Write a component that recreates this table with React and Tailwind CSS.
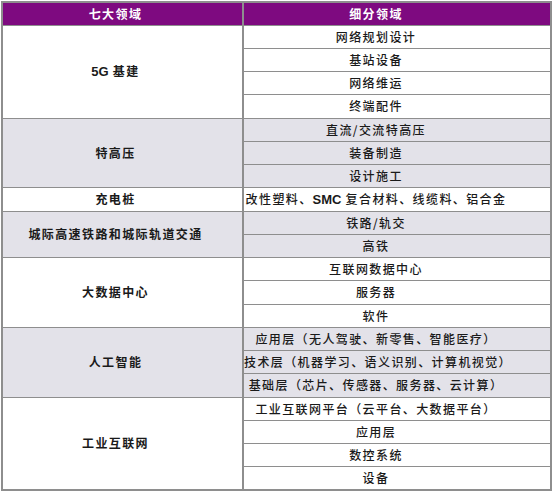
const groups = [
  { name: '5G 基建', bg: 'bg-white', items: ['网络规划设计', '基站设备', '网络维运', '终端配件'] },
  { name: '特高压', bg: 'bg-[#e3e2e9]', items: ['直流/交流特高压', '装备制造', '设计施工'] },
  { name: '充电桩', bg: 'bg-white', items: ['改性塑料、SMC 复合材料、线缆料、铝合金'] },
  { name: '城际高速铁路和城际轨道交通', bg: 'bg-[#e3e2e9]', items: ['铁路/轨交', '高铁'] },
  { name: '大数据中心', bg: 'bg-white', items: ['互联网数据中心', '服务器', '软件'] },
  {
    name: '人工智能',
    bg: 'bg-[#e3e2e9]',
    items: ['应用层（无人驾驶、新零售、智能医疗）', '技术层（机器学习、语义识别、计算机视觉）', '基础层（芯片、传感器、服务器、云计算）'],
  },
  { name: '工业互联网', bg: 'bg-white', items: ['工业互联网平台（云平台、大数据平台）', '应用层', '数控系统', '设备'] },
];

const font = { fontFamily: '"Noto Sans CJK SC", "Liberation Sans", sans-serif' };
const latin = { fontFamily: '"Liberation Sans", sans-serif' };

export default function App() {
  return (
    <div className="w-[553px] h-[492px] bg-white pt-px pl-px" style={font}>
      <table className="w-[551px] border-collapse border-2 border-[#8e8e8e] text-[12px] tracking-[1.4px] text-[#1a1a1a]">
        <thead>
          <tr className="h-[23px] bg-[#7e0a80] text-white">
            <th className="w-[241px] pr-[14px] border-r-2 border-[#8e8e8e] font-bold">七大领域</th>
            <th className="pr-[42px] font-bold">细分领域</th>
          </tr>
        </thead>
        <tbody>
          {groups.map((g) =>
            g.items.map((item, i) => (
              <tr key={g.name + i} className={`h-[23.25px] ${g.bg}`}>
                {i === 0 && (
                  <td
                    rowSpan={g.items.length}
                    className="pr-[14px] text-center font-bold border-r-2 border-t border-[#8e8e8e]"
                  >
                    {g.name.startsWith('5G') ? (
                      <>
                        <span className="text-[13px] tracking-normal" style={latin}>5G</span> 基建
                      </>
                    ) : (
                      g.name
                    )}
                  </td>
                )}
                <td className="pr-[42px] text-center font-medium border-t border-[#8e8e8e] leading-none">
                  {item.includes('SMC') ? (
                    <>
                      改性塑料、<span className="font-bold tracking-normal text-[13px]" style={latin}>SMC</span> 复合材料、线缆料、铝合金
                    </>
                  ) : (
                    item
                  )}
                </td>
              </tr>
            ))
          )}
        </tbody>
      </table>
    </div>
  );
}
